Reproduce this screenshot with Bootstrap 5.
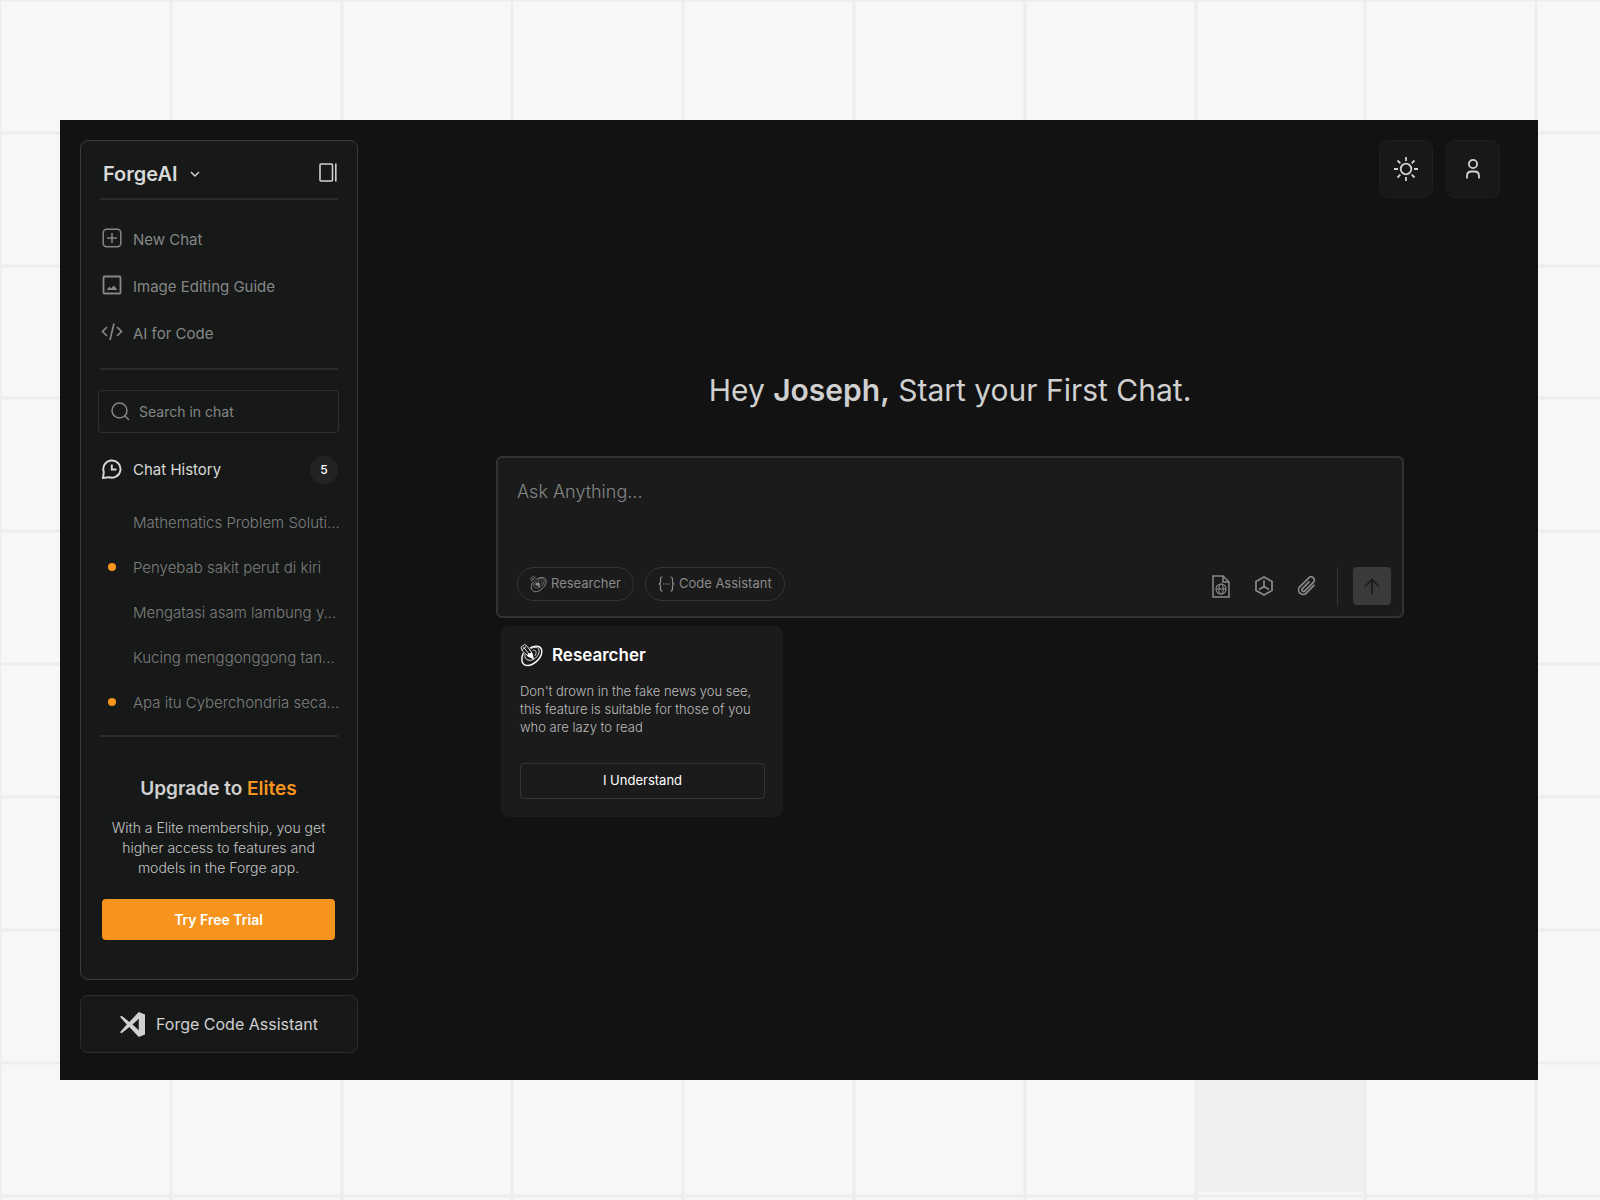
<!DOCTYPE html>
<html lang="en">
<head>
<meta charset="utf-8">
<meta name="viewport" content="width=device-width, initial-scale=1">
<title>ForgeAI</title>
<link href="https://cdn.jsdelivr.net/npm/bootstrap@5.3.0/dist/css/bootstrap.min.css" rel="stylesheet">
<style>
  body { background: #f7f7f7; font-family: Inter, "Liberation Sans", sans-serif; color: #d0d0d0; min-height: 100vh; }
  svg { display: block; flex: none; fill: none; stroke: currentColor; }
  .backdrop { z-index: -1; }
  .window { background: #121212; margin: 120px 62px 120px 60px; padding: 20px 38px 27px 20px; }
  .sidebar { width: 278px; gap: 15px; }
  .panel { background: #171918; border: 1px solid #3a3b3b; border-radius: 8px; }
  .panel-main { padding: 0 19px 39px; }
  .rule { height: 2px; background: #2a2b2b; }
  .brand { height: 57px; padding: 9px 1px 0 3px; }
  .brand-btn { font-size: 20px; font-weight: 600; line-height: 24px; color: #d8d8d8; gap: 12px; }
  .plain { background: none; border: 0; padding: 0; }
  .menu { padding: 16px 0 11px; }
  .menu a { height: 47px; }
  .side-row { color: #858787; text-decoration: none; font-size: 15px; line-height: 20px; gap: 9px; }
  .side-row .slot { width: 24px; display: flex; justify-content: center; flex: none; margin: 0 0 3px -1px; }
  .find { margin: 20px -1px 23px -2px; height: 43px; border: 1px solid #2f3030; border-radius: 4px; padding: 0 12px; gap: 9px; color: #858787; }
  .find input { background: none; border: 0; outline: 0; padding: 0; font-size: 14px; color: #d0d0d0; min-width: 0; }
  ::placeholder { color: #858787; opacity: 1; }
  .menu .side-row, .history-head, .history .side-row { padding-left: 1px; }
  .history-head { color: #d8d8d8; height: 28px; }
  .count { width: 28px; height: 28px; border-radius: 50%; background: #232323; color: #fff; font-size: 12px; font-weight: 500; }
  .history { padding: 15px 0 11px; }
  .history a { height: 45px; color: #7c7e7e; font-weight: 300; padding-top: 3px; }
  .dot { width: 8px; height: 8px; border-radius: 50%; background: #f7941d; }
  .upgrade { padding: 39px 3px 0 2px; }
  .upgrade h2 { font-size: 19px; font-weight: 600; line-height: 26px; margin: 0 0 16px; }
  .accent { color: #f7941d; }
  .upgrade p { font-size: 14px; font-weight: 300; line-height: 20px; margin: 0 0 21px; color: #c4c5c5; }
  .trial { background: #f7941d; color: #fff; border: 0; border-radius: 4px; height: 41px; font-size: 14px; font-weight: 600; }
  .assistant { height: 58px; border-color: #2c2d2d; color: #d0d0d0; font-size: 16px; gap: 11px; }
  .content { padding-left: 42px; }
  .tools { gap: 13px; }
  .tool { width: 54px; height: 58px; border: 1px solid #1d1f1e; color: #d0d0d0; border-radius: 9px; background: #171918; }
  .chat { width: 100%; max-width: 908px; margin-top: 170px; }
  .chat h1 { font-size: 30px; line-height: 44px; margin: 0 0 44px; font-weight: 400; }
  .chat h1 b { font-weight: 600; }
  .composer { background: #1b1b1b; border: 2px solid #333; border-radius: 6px; padding: 21px 11px 11px 19px; }
  .composer textarea { background: none; border: 0; outline: 0; resize: none; height: 88px; padding: 0; font-size: 18px; line-height: 26px; font-weight: 300; color: #d0d0d0; }
  .chips { gap: 11px; height: 34px; }
  .chip { height: 34px; border: 1px solid #353535; border-radius: 17px; color: #8a8a8a; font-size: 13px; padding: 0 12px; gap: 4px; }
  .attach { height: 38px; }
  .attach-btn { color: #8a8a8a; width: 43px; display: flex; justify-content: center; }
  .bar { width: 1px; background: #353535; margin: 0 15px 0 9px; }
  .send { width: 38px; height: 38px; border-radius: 4px; background: #3a3a3a; color: #1b1b1b; }
  .tip { width: 282px; margin: 8px 0 0 5px; background: #1b1b1b; border-radius: 8px; padding: 17px 18px 18px 19px; color: #bcbcbc; }
  .tip h2 { font-size: 17px; font-weight: 600; line-height: 24px; color: #fff; gap: 9px; margin: 0 0 15px; }
  .tip p { font-size: 13px; font-weight: 300; line-height: 18px; margin: 0 0 27px; }
  .tip button { height: 36px; border: 1px solid #353535; border-radius: 4px; background: none; color: #fff; font-size: 13px; }
</style>
<script src="https://cdn.jsdelivr.net/npm/bootstrap@5.3.0/dist/js/bootstrap.bundle.min.js"></script>
</head>
<body>
<svg class="backdrop position-absolute top-0 start-0 w-100 h-100" viewBox="0 0 1600 1200" preserveAspectRatio="none" aria-hidden="true">
  <path d="M1196 1063H1365V1192H1196Z" fill="#f0f0f0" stroke="none"/>
  <path stroke="#ededed" stroke-width="3" d="M0 0V1200M171 0V1200M342 0V1200M512 0V1200M683 0V1200M854 0V1200M1025 0V1200M1196 0V1200M1365 0V1200M1536 0V1200M0 0H1600M0 133H1600M0 266H1600M0 398H1600M0 531H1600M0 664H1600M0 797H1600M0 930H1600M0 1063H1600M0 1196H1600"/>
</svg>
<svg class="d-none" aria-hidden="true">
  <symbol id="planet" viewBox="0 0 24 24">
    <path d="M3.500 10C1 15 1 21.500 6.500 22.800C13 24 22.500 16 22.800 8.500C23 3 17 1 10.500 4.500" stroke-width="1.400"/>
    <path d="M11 5.500C15 3 20.500 3.500 20 8.500C19 14 14 18 9.500 17.500C5.500 17 4.500 14 5.500 11.500" stroke-width=".9"/>
    <path d="M13.500 7C17.500 6.500 17.500 10 15.500 13" stroke-width=".8"/>
    <path d="M1 4L5 1L8 3.500L12.500 10L14 16L8.500 13L2.500 8Z" stroke-width=".9"/>
    <path d="M3.500 3.500L11 13M6.500 3L2.500 6.500" stroke-width=".9"/>
    <path d="M8 11L12.500 9.500L14 16L8 13.500Z" fill="currentColor" stroke="none"/>
  </symbol>
</svg>

<div class="window d-flex">
  <aside class="sidebar d-flex flex-column flex-shrink-0">
    <div class="panel panel-main">
      <div class="brand d-flex align-items-center justify-content-between">
        <button class="plain brand-btn d-flex align-items-center" type="button">ForgeAI
          <svg width="10" height="10" viewBox="0 0 10 10" stroke-width="1.400"><path d="M1 3L5 7L9 3"/></svg>
        </button>
        <button class="plain text-reset mb-1" type="button" aria-label="Toggle sidebar">
          <svg width="18" height="19" viewBox="0 0 18 19" stroke-width="1.600"><rect x="1" y="1" width="12.500" height="17" rx="1"/><path d="M16.800 .5V18.500"/></svg>
        </button>
      </div>
      <div class="rule"></div>
      <nav class="menu">
        <a class="side-row d-flex align-items-center" href="#"><span class="slot"><svg width="20" height="20" viewBox="0 0 20 20" stroke-width="1.500"><rect x="1.200" y="1.200" width="17.600" height="17.600" rx="3.500"/><path d="M10 5V15M5 10H15"/></svg></span>New Chat</a>
        <a class="side-row d-flex align-items-center" href="#"><span class="slot"><svg width="20" height="20" viewBox="0 0 20 20" stroke-width="1.800"><rect x="1.500" y="1.500" width="17" height="17" rx="1"/><path fill="currentColor" stroke="none" d="M4.500 15L7.500 11.500L9 13.500L12 10.500L15.500 15Z"/></svg></span>Image Editing Guide</a>
        <a class="side-row d-flex align-items-center" href="#"><span class="slot"><svg width="22" height="20" viewBox="0 0 22 20" stroke-width="1.700"><path d="M6 5L1.500 9.500L6 14M16 5L20.500 9.500L16 14M13 1.500L9 18"/></svg></span>AI for Code</a>
      </nav>
      <div class="rule"></div>
      <label class="find d-flex align-items-center">
        <svg width="19" height="19" viewBox="0 0 19 19" stroke-width="1.500"><circle cx="8.500" cy="8.500" r="7.500"/><path d="M14 14L18 18"/></svg>
        <input class="flex-grow-1" type="search" placeholder="Search in chat" aria-label="Search in chat">
      </label>
      <div class="side-row history-head d-flex align-items-center">
        <span class="slot"><svg width="20" height="20" viewBox="0 0 20 20" stroke-width="1.900"><path d="M1 19L1.800 13A8.600 8.600 0 1 1 7 18.200Z"/><path d="M9.800 5.500V10.500H14.500"/></svg></span>
        Chat History
        <span class="count d-flex align-items-center justify-content-center ms-auto">5</span>
      </div>
      <nav class="history">
        <a class="side-row d-flex align-items-center text-nowrap" href="#"><span class="slot"></span>Mathematics Problem Soluti...</a>
        <a class="side-row d-flex align-items-center text-nowrap" href="#"><span class="slot"><i class="dot"></i></span>Penyebab sakit perut di kiri</a>
        <a class="side-row d-flex align-items-center text-nowrap" href="#"><span class="slot"></span>Mengatasi asam lambung y...</a>
        <a class="side-row d-flex align-items-center text-nowrap" href="#"><span class="slot"></span>Kucing menggonggong tan...</a>
        <a class="side-row d-flex align-items-center text-nowrap" href="#"><span class="slot"><i class="dot"></i></span>Apa itu Cyberchondria seca...</a>
      </nav>
      <div class="rule"></div>
      <section class="upgrade text-center">
        <h2>Upgrade to <span class="accent">Elites</span></h2>
        <p>With a Elite membership, you get<br>higher access to features and<br>models in the Forge app.</p>
        <button class="trial w-100" type="button">Try Free Trial</button>
      </section>
    </div>
    <button class="panel assistant d-flex align-items-center justify-content-center" type="button">
      <svg width="25" height="25" viewBox="0 0 24 24"><path fill="currentColor" stroke="none" fill-rule="evenodd" d="M0 4.500L1.500 3.500L9 9.500L18 0L24 2.500V21.500L18 24L9 14.500L1.500 20.500L0 19.500L6.500 12ZM18 6.500L12 12L18 17.500Z"/></svg>
      Forge Code Assistant
    </button>
  </aside>

  <main class="content flex-grow-1 d-flex flex-column align-items-center">
    <div class="tools d-flex justify-content-end w-100">
      <button class="tool d-flex align-items-center justify-content-center" type="button" aria-label="Light mode">
        <svg width="24" height="24" viewBox="0 0 24 24" stroke-width="1.800"><circle cx="12" cy="12" r="5.300"/><path d="M12 0V4M12 20V24M0 12H4M20 12H24M3.500 3.500L6.300 6.300M17.700 17.700L20.500 20.500M3.500 20.500L6.300 17.700M17.700 6.300L20.500 3.500"/></svg>
      </button>
      <button class="tool d-flex align-items-center justify-content-center" type="button" aria-label="Profile">
        <svg width="14" height="20" viewBox="0 0 14 20" stroke-width="1.800"><circle cx="7" cy="5" r="4.100"/><path d="M1 19.500V17Q1 12.500 5.500 12.500H8.500Q13 12.500 13 17V19.500"/></svg>
      </button>
    </div>
    <div class="chat">
      <h1 class="text-center">Hey <b>Joseph,</b> Start your First Chat.</h1>
      <form class="composer">
        <textarea class="w-100 d-block" placeholder="Ask Anything..." aria-label="Ask Anything"></textarea>
        <div class="d-flex justify-content-between align-items-start">
          <div class="chips d-flex">
            <button class="plain chip d-flex align-items-center" type="button"><svg width="17" height="18"><use href="#planet"/></svg>Researcher</button>
            <button class="plain chip d-flex align-items-center" type="button"><svg width="17" height="16" viewBox="0 0 17 16" stroke-width="1.200"><path d="M4.500 1Q2.500 1 2.500 3V6Q2.500 8 .5 8Q2.500 8 2.500 10V13Q2.500 15 4.500 15M12.500 1Q14.500 1 14.500 3V6Q14.500 8 16.500 8Q14.500 8 14.500 10V13Q14.500 15 12.500 15"/><path d="M5 8H12" stroke-dasharray="1.500 1.200"/></svg>Code Assistant</button>
          </div>
          <div class="attach d-flex">
            <div class="d-flex align-items-center">
              <button class="plain attach-btn" type="button" aria-label="Search the web"><svg width="18" height="23" viewBox="0 0 18 23" stroke-width="1.500"><path d="M1 1H11L17 7V22H1ZM11 1V7H17"/><g stroke-width="1.100"><circle cx="9" cy="14" r="5"/><ellipse cx="9" cy="14" rx="2.200" ry="5"/><path d="M4 14H14"/></g></svg></button>
              <button class="plain attach-btn" type="button" aria-label="Models"><svg width="18" height="20" viewBox="0 0 18 20" stroke-width="1.700"><path d="M9 1L17 5.500V14.500L9 19L1 14.500V5.500ZM9 4.500V10.500M9 10.500L4 13.500M9 10.500L14 13.500"/></svg></button>
              <button class="plain attach-btn" type="button" aria-label="Attach a file"><svg width="20" height="20" viewBox="0 0 20 20" stroke-width="1.700"><path transform="rotate(45 10 10)" d="M14.500 4V15.500A4.500 4.500 0 0 1 5.500 15.500V3A3.200 3.200 0 0 1 12 3V15A1.700 1.700 0 0 1 8.600 15V5"/></svg></button>
            </div>
            <div class="bar"></div>
            <button class="plain send d-flex align-items-center justify-content-center" type="submit" aria-label="Send"><svg width="16" height="16" viewBox="0 0 16 16" stroke-width="1.700"><path d="M8 16V1.500M1 8.500L8 1.500L15 8.500"/></svg></button>
          </div>
        </div>
      </form>
      <section class="tip">
        <h2 class="d-flex align-items-center"><svg width="23" height="24"><use href="#planet"/></svg>Researcher</h2>
        <p>Don't drown in the fake news you see,<br>this feature is suitable for those of you<br>who are lazy to read</p>
        <button class="w-100" type="button">I Understand</button>
      </section>
    </div>
  </main>
</div>
</body>
</html>
